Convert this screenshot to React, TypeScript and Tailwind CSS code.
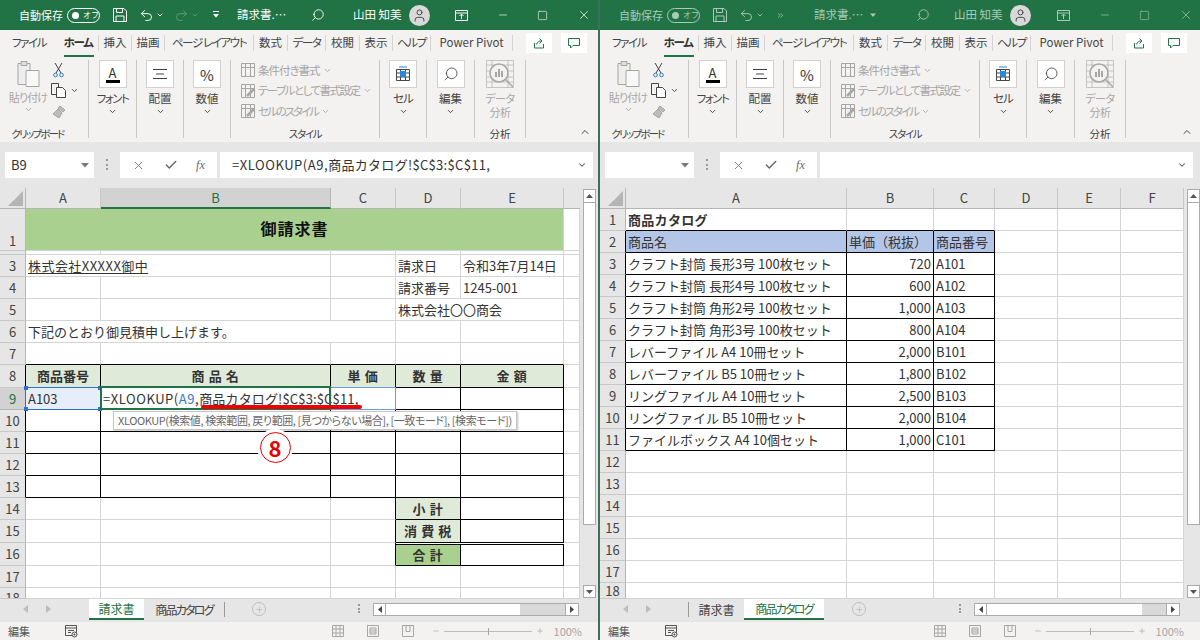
import { ReactNode } from "react";
import { Undo2, Redo2, Search, User, X, Minus, Square, ChevronDown, ChevronUp, Check, Plus, ChevronsRight } from "lucide-react";

const TABS: [string, number, string][] = [
  ["ファイル", 58, "tracking-[-1.4px]"],
  ["ホーム", 41, "tracking-[-1.3px]"],
  ["挿入", 33, ""],
  ["描画", 33, ""],
  ["ページ レイアウト", 89, "tracking-[-1.4px]"],
  ["数式", 34, ""],
  ["データ", 38, "tracking-[-1.4px]"],
  ["校閲", 34, ""],
  ["表示", 33, ""],
  ["ヘルプ", 38, "tracking-[-1.3px]"],
  ["Power Pivot", 82, ""],
];

function Caret({ className = "text-[#666]" }: { className?: string }) {
  return <ChevronDown className={`h-[9px] w-[9px] ${className}`} strokeWidth={2.5} />;
}

function SaveIcon() {
  return (
    <svg width="14" height="14" viewBox="0 0 14 14" fill="none" stroke="currentColor" strokeWidth="1">
      <path d="M.5.5h10.5l2.5 2.5v10.5H.5z" />
      <path d="M3.5.5v4h6v-4M3 13.5V8h8v5.5" />
    </svg>
  );
}

function TitleBar({ active }: { active: boolean }) {
  const fg = active ? "text-white" : "text-[#a9cbb7]";
  return (
    <div className={`flex h-[30px] items-center bg-[#217346] pl-[19px] text-[12px] ${fg}`}>
      <span className="w-[42px] whitespace-nowrap text-[11px]">自動保存</span>
      <div className="ml-[6px] flex h-[15px] w-[33px] items-center rounded-full border border-current pl-[4px]">
        <div className="h-[7px] w-[7px] rounded-full bg-current" />
        <span className="ml-[4px] text-[8px] leading-none">オフ</span>
      </div>
      <div className="ml-[13px]"><SaveIcon /></div>
      <Undo2 className="ml-[12px] h-[15px] w-[15px]" strokeWidth={1.5} />
      <ChevronDown className="ml-[2px] h-[8px] w-[8px]" strokeWidth={2.5} />
      {active ? (
        <>
          <Redo2 className="ml-[10px] h-[15px] w-[15px] text-[#5f9c7c]" strokeWidth={1.5} />
          <ChevronDown className="ml-[2px] h-[8px] w-[8px] text-[#5f9c7c]" strokeWidth={2.5} />
          <svg className="ml-[13px]" width="8" height="8" viewBox="0 0 8 8" fill="currentColor">
            <rect x="1" y="0" width="6" height="1" />
            <path d="M1 3h6L4 6.5z" />
          </svg>
          <span className="ml-[17px] w-[46px] whitespace-nowrap text-[11.5px]">請求書.…</span>
          <Search className="ml-[28px] h-[14px] w-[14px] -scale-x-100" strokeWidth={1.5} />
          <span className="ml-[28px] w-[45px] whitespace-nowrap text-[11.5px]">山田 知美</span>
        </>
      ) : (
        <>
          <ChevronsRight className="ml-[12px] h-[9px] w-[9px]" strokeWidth={2} />
          <span className="ml-[29px] w-[43px] whitespace-nowrap text-[11.5px]">請求書.…</span>
          <svg className="ml-[12px]" width="8" height="8" viewBox="0 0 8 8" fill="currentColor">
            <path d="M1 2.5h6L4 6z" />
          </svg>
          <Search className="ml-[39px] h-[14px] w-[14px] -scale-x-100" strokeWidth={1.5} />
          <span className="ml-[24px] w-[45px] whitespace-nowrap text-[11.5px]">山田 知美</span>
        </>
      )}
      <div className="ml-[11px] flex h-[21px] w-[21px] items-center justify-center rounded-full bg-[#d9d9d9]">
        <User className="h-[15px] w-[15px] text-[#444]" strokeWidth={1.5} />
      </div>
      <svg className={active ? "ml-[25px]" : "ml-[26px]"} width="13" height="11" viewBox="0 0 13 11" fill="none" stroke="currentColor">
        <path d="M.5.5h12v10H.5zM.5 3h12M6.5 9V4.5M4.5 6l2-2 2 2" />
      </svg>
      <Minus className="ml-[29px] h-[12px] w-[12px]" strokeWidth={1.3} />
      <Square className="ml-[28px] h-[11px] w-[11px]" strokeWidth={1.3} />
      <X className="ml-[29px] h-[14px] w-[14px]" strokeWidth={1.2} />
    </div>
  );
}

function TabRow() {
  return (
    <div className="flex h-[26px] items-center bg-[#f3f2f1] text-[11.5px] text-[#444] [font-feature-settings:'palt']">
      {TABS.map(([label, w, track], i) => (
        <div
          key={label}
          className={`relative flex h-[16px] items-center justify-center whitespace-nowrap ${track} ${i === 0 ? "" : "border-r border-[#d6d4d2]"} ${i === 1 ? "font-bold text-[#333]" : ""}`}
          style={{ width: w }}
        >
          {label}
          {i === 1 && <div className="absolute bottom-[-6px] left-[6px] h-[2px] w-[30px] bg-[#217346]" />}
        </div>
      ))}
      <div className="ml-[13px] flex h-[20px] w-[26px] items-center justify-center bg-white">
        <svg width="12" height="12" viewBox="0 0 12 12" fill="none" stroke="#217346">
          <path d="M1.5 6v5h9V7M3.5 7.5C4 5 6 4 8 4M6.5 1.5L9 4 6.5 6.5" />
        </svg>
      </div>
      <div className="ml-[9px] flex h-[20px] w-[26px] items-center justify-center bg-white">
        <svg width="12" height="11" viewBox="0 0 12 11" fill="none" stroke="#217346">
          <path d="M.5.5h11v7H5L2.5 10V7.500H.5z" />
        </svg>
      </div>
    </div>
  );
}

function Group({ width, label, track = "", children }: { width: number; label?: string; track?: string; children: ReactNode }) {
  return (
    <div className="flex h-[78px] flex-col border-r border-[#c8c6c4]" style={{ width }}>
      <div className="min-h-0 flex-1">{children}</div>
      {label && <div className={`-mb-[3px] h-[14px] whitespace-nowrap text-center text-[10.5px] leading-[14px] text-[#444] ${track}`}>{label}</div>}
    </div>
  );
}

function BigButton({ label, track = "", children }: { label: string; track?: string; children: ReactNode }) {
  return (
    <div className="flex flex-col items-center">
      <div className="flex h-[28px] w-[28px] items-center justify-center border border-[#d2d0ce] bg-white">{children}</div>
      <span className={`mt-[2px] whitespace-nowrap text-[11.5px] leading-[17px] text-[#444] ${track}`}>{label}</span>
      <Caret className="text-[#444]" />
    </div>
  );
}

function StyleRow({ label, kind, track }: { label: string; kind: number; track: string }) {
  return (
    <div className="flex h-[20.500px] items-center text-[11.5px] text-[#a6a6a6]">
      <svg className="ml-[10px] mr-[3px] shrink-0" width="14" height="14" viewBox="0 0 14 14" fill="none" stroke="#a6a6a6">
        <path d="M.5.5h13v13H.5zM.5 4.500h13M4.500.5v13M9.500.5v13" />
        {kind > 0 && <path d="M6 12L13 5" strokeWidth="2.500" />}
      </svg>
      <span className={`whitespace-nowrap ${track}`}>{label}</span>
      <Caret className="ml-[3px] text-[#a6a6a6]" />
    </div>
  );
}

function Ribbon() {
  return (
    <div className="flex h-[86px] items-start bg-[#f3f2f1] pt-[4px] [font-feature-settings:'palt']">
      <Group width={89} label="クリップボード" track="pr-[13px] tracking-[-1.800px]">
        <div className="flex">
          <div className="ml-[10px] flex w-[36px] flex-col items-center">
            <svg width="26" height="27" viewBox="0 0 26 27" fill="none" stroke="#a6a6a6">
              <path d="M3 3.500h12v21H3z" fill="#eee" />
              <path d="M6 1.500h6v4H6z" fill="#ddd" />
              <path d="M11 10.500h13v16H11z" fill="#f8f8f8" />
            </svg>
            <span className="mt-[3px] whitespace-nowrap text-[11px] leading-[15px] tracking-[-0.9px] text-[#a6a6a6]">貼り付け</span>
            <Caret className="text-[#a6a6a6]" />
          </div>
          <div className="ml-[5px] flex flex-col items-start">
            <svg className="ml-[2px] mt-[3px]" width="11" height="15" viewBox="0 0 11 15" fill="none" stroke="#444">
              <path d="M2 0l6 10M9 0L3 10" />
              <circle cx="2.500" cy="12" r="1.800" stroke="#2b7cd3" />
              <circle cx="8.500" cy="12" r="1.800" stroke="#2b7cd3" />
            </svg>
            <div className="mt-[5px] flex items-center">
              <svg width="15" height="15" viewBox="0 0 15 15" fill="none" stroke="#444">
                <path d="M.5.5h7v11H.5z" />
                <path d="M5.500 4.500h6l3 3v7h-9z" fill="#fff" />
              </svg>
              <Caret className="ml-[4px] text-[#444]" />
            </div>
            <svg className="ml-[1px] mt-[7px]" width="14" height="14" viewBox="0 0 14 14" fill="#bdbdbd" stroke="#a6a6a6">
              <path d="M8 1l5 4-2 2-5-4zM6 4l4 4-3 5-6-4z" />
            </svg>
          </div>
        </div>
      </Group>
      <Group width={48}>
        <BigButton label="フォント" track="tracking-[-1.500px]">
          <div className="flex flex-col items-center">
            <span className="text-[13px] leading-[13px] text-[#333]">A</span>
            <div className="mt-[1px] h-[3px] w-[14px] bg-black" />
          </div>
        </BigButton>
      </Group>
      <Group width={47}>
        <BigButton label="配置">
          <svg width="14" height="12" viewBox="0 0 14 12" stroke="#444" fill="none">
            <path d="M0 1.500h14M3 6h8M0 10.500h14" />
          </svg>
        </BigButton>
      </Group>
      <Group width={47}>
        <BigButton label="数値">
          <span className="text-[15px] leading-none text-[#333]">%</span>
        </BigButton>
      </Group>
      <Group width={149} label="スタイル" track="tracking-[-1.300px]">
        <StyleRow label="条件付き書式" kind={0} track="tracking-[-1px]" />
        <StyleRow label="テーブルとして書式設定" kind={1} track="tracking-[-1.500px]" />
        <StyleRow label="セルのスタイル" kind={1} track="tracking-[-2px]" />
      </Group>
      <Group width={47}>
        <BigButton label="セル" track="tracking-[-1px]">
          <svg width="16" height="16" viewBox="0 0 16 16" fill="none" stroke="#444">
            <path d="M1.500 3.500h13v11h-13zM1.500 7h13M1.500 11h13M5.500 3.500v11M10.500 3.500v11" />
            <rect x="5" y="5" width="6" height="6" fill="#2b88d8" stroke="none" />
            <path d="M4 1h8" stroke="#2b88d8" />
          </svg>
        </BigButton>
      </Group>
      <Group width={48}>
        <BigButton label="編集">
          <Search className="h-[16px] w-[16px] -scale-x-100 text-[#444]" strokeWidth={1.3} />
        </BigButton>
      </Group>
      <Group width={51} label="分析">
        <div className="flex flex-col items-center">
          <svg width="28" height="28" viewBox="0 0 28 28" fill="none" stroke="#a6a6a6">
            <path d="M.5.5h27v27H.5zM.5 5h27M.5 11h27M.5 17h27M.5 22h27M6 .5v27M22 .5v27" strokeOpacity=".6" />
            <circle cx="13" cy="13" r="9" fill="#f3f2f1" strokeWidth="1.500" />
            <path d="M10 17v-5M13 17V9M16 17v-6" strokeWidth="2" />
            <path d="M19 19l8 8" strokeWidth="1.500" />
          </svg>
          <span className="mt-[3px] text-center text-[11px] leading-[14px] tracking-[-0.5px] text-[#a6a6a6]">データ<br />分析</span>
        </div>
      </Group>
      <div className="flex h-[78px] flex-1 items-end justify-end pr-[7px]">
        <ChevronUp className="h-[12px] w-[12px] text-[#444]" strokeWidth={2} />
      </div>
    </div>
  );
}

function FormulaBar({ name, children }: { name: string; children?: ReactNode }) {
  return (
    <div className="flex h-[46px] items-start bg-[#e6e6e6] pl-[5px] pt-[10px]">
      <div className="flex h-[26px] w-[89px] items-center justify-between bg-white pl-[6px] pr-[5px] text-[13px] text-[#333]">
        <span>{name}</span>
        <svg width="8" height="5" viewBox="0 0 8 5" fill="#777"><path d="M0 0h8L4 4.500z" /></svg>
      </div>
      <div className="ml-[12px] mt-[7px] flex h-[11px] w-[2px] flex-col justify-between">
        <div className="h-[2px] w-[2px] bg-[#999]" />
        <div className="h-[2px] w-[2px] bg-[#999]" />
        <div className="h-[2px] w-[2px] bg-[#999]" />
      </div>
      <div className="ml-[12px] flex h-[26px] w-[97px] items-center justify-around bg-white px-[3px] text-[#666]">
        <X className="h-[13px] w-[13px]" strokeWidth={1.5} />
        <Check className="h-[14px] w-[14px]" strokeWidth={2.5} />
        <span className="font-['Liberation_Serif',serif] text-[12px] italic">fx</span>
      </div>
      <div className="ml-[3px] flex h-[26px] w-[373px] items-center justify-between bg-white pl-[12px] pr-[6px] text-[13px] text-[#333]">
        <span className="whitespace-nowrap">{children}</span>
        <ChevronDown className="h-[10px] w-[10px] text-[#555]" strokeWidth={2.5} />
      </div>
    </div>
  );
}

function Col({ label, selected }: { label: string; selected?: boolean }) {
  return (
    <div
      className={`flex items-center justify-center border-r border-b text-[13px] ${
        selected
          ? "border-r-[#b5b5b5] border-b-2 border-b-[#217346] bg-[#d2d2d2] text-[#217346]"
          : "border-r-[#c8c8c8] border-b-[#b5b5b5] bg-[#e6e6e6] text-[#444]"
      }`}
    >
      {label}
    </div>
  );
}

function Corner() {
  return (
    <div className="flex items-end justify-end border-r border-b border-[#b5b5b5] bg-[#e6e6e6] pb-[2px] pr-[2px]">
      <svg width="15" height="15" viewBox="0 0 15 15"><path d="M15 0v15H0z" fill="#b4b4b4" /></svg>
    </div>
  );
}

function Row({ n, selected, line, place = "items-center" }: { n?: number; selected?: boolean; line?: boolean; place?: string }) {
  return (
    <div
      className={`flex justify-center overflow-hidden border-b border-r text-[13px] ${place} ${
        line ? "border-r-black" : "border-r-[#b5b5b5]"
      } ${selected ? "border-b-[#b5b5b5] bg-[#d2d2d2] text-[#217346]" : "border-b-[#c8c8c8] bg-[#e6e6e6] text-[#444]"}`}
    >
      {n}
    </div>
  );
}

type CellProps = {
  children?: ReactNode;
  r?: boolean;
  b?: boolean;
  fill?: string;
  span?: string;
  align?: string;
  weight?: string;
};

function Cell({ children, r, b, fill = "bg-white", span = "", align = "justify-start", weight = "" }: CellProps) {
  return (
    <div
      className={`flex items-center overflow-visible whitespace-nowrap border-r border-b px-[2px] text-[13px] text-[#333] ${
        r ? "border-r-black" : "border-r-[#d4d4d4]"
      } ${b ? "border-b-black" : "border-b-[#d4d4d4]"} ${fill} ${span} ${align} ${weight}`}
    >
      {children}
    </div>
  );
}

function Head({ children, span = "", fill = "bg-[#e0ead8]" }: { children?: ReactNode; span?: string; fill?: string }) {
  return (
    <Cell r b fill={fill} span={span} align="justify-center" weight="font-bold tracking-[0.6px]">
      {children}
    </Cell>
  );
}

function InvoiceSheet() {
  return (
    <div className="relative grid h-[411px] w-[580px] grid-cols-[26px_75px_230px_65px_65px_103px_16px] grid-rows-[21px_42px_4px_22px_22px_22px_22px_22px_23px_22px_22px_22px_22px_22px_22px_23px_23px_22px_11px] overflow-hidden">
      <Corner />
      <Col label="A" />
      <Col label="B" selected />
      <Col label="C" />
      <Col label="D" />
      <Col label="E" />
      <div className="border-b border-[#b5b5b5] bg-[#e6e6e6]" />

      <Row n={1} place="items-end" />
      <Cell span="col-span-5" fill="bg-[#a9d08e]" align="justify-center" weight="font-bold">
        <span className="mb-[3px] text-[16px] tracking-[1px] text-[#111]">御請求書</span>
      </Cell>
      <Cell />

      <Row />
      <Cell /><Cell /><Cell /><Cell /><Cell /><Cell />

      <Row n={3} />
      <Cell span="col-span-2"><span className="tracking-[0.45px] underline underline-offset-2">株式会社XXXXX御中</span></Cell>
      <Cell /><Cell>請求日</Cell><Cell>令和3年7月14日</Cell><Cell />

      <Row n={4} />
      <Cell /><Cell /><Cell /><Cell>請求番号</Cell><Cell>1245-001</Cell><Cell />

      <Row n={5} />
      <Cell /><Cell /><Cell /><Cell span="col-span-2">株式会社〇〇商会</Cell><Cell />

      <Row n={6} />
      <Cell span="col-span-3">下記のとおり御見積申し上げます。</Cell><Cell /><Cell /><Cell />

      <Row n={7} />
      <Cell b /><Cell b /><Cell b /><Cell b /><Cell b /><Cell />

      <Row n={8} line />
      <Head><span className="tracking-[0px]">商品番号</span></Head>
      <Head>商 品 名</Head>
      <Head>単 価</Head>
      <Head>数 量</Head>
      <Head>金 額</Head>
      <Cell />

      <Row n={9} selected line />
      <Cell r b fill="bg-[#e8eef9]">A103</Cell>
      <Cell span="col-span-2" r b>
        <span className="tracking-[0.55px]">=XLOOKUP(<span className="text-[#3b78c9]">A9</span>,</span>
        <span className="tracking-[0.15px]">商品カタログ!$C$3:$C$11,</span>
      </Cell>
      <Cell r b /><Cell r b /><Cell />

      {[10, 11, 12, 13].map((n) => (
        <div key={n} className="contents">
          <Row n={n} line />
          <Cell r b /><Cell r b /><Cell r b /><Cell r b /><Cell r b /><Cell />
        </div>
      ))}

      <Row n={14} />
      <Cell /><Cell /><Cell r /><Head>小 計</Head><Cell r b /><Cell />
      <Row n={15} />
      <Cell /><Cell /><Cell r /><Head>消 費 税</Head><Cell r b /><Cell />
      <Row n={16} />
      <Cell /><Cell /><Cell r />
      <Head fill="bg-[#a9d08e]" span="mt-[1px] border-t border-t-black">合 計</Head>
      <Cell r b span="mt-[1px] border-t border-t-black" />
      <Cell />
      <Row n={17} />
      <Cell /><Cell /><Cell /><Cell /><Cell /><Cell />
      <Row n={18} place="items-start" />
      <Cell /><Cell /><Cell /><Cell /><Cell /><Cell />

      {/* 編集中の参照セルと注釈 */}
      <div className="absolute left-[25px] top-[199px] h-[23px] w-[76px] border border-[#2f6fd0]">
        <div className="absolute -left-[2px] -top-[2px] h-[4px] w-[4px] bg-[#2f6fd0]" />
        <div className="absolute -right-[2px] -top-[2px] h-[4px] w-[4px] bg-[#2f6fd0]" />
        <div className="absolute -bottom-[2px] -left-[2px] h-[4px] w-[4px] bg-[#2f6fd0]" />
        <div className="absolute -bottom-[2px] -right-[2px] h-[4px] w-[4px] bg-[#2f6fd0]" />
      </div>
      <div className="absolute left-[101px] top-[199px] h-[23px] w-[295px] border border-[#6c9be0]" />
      <div className="absolute left-[100px] top-[198px] h-[24px] w-[231px] border-2 border-[#217346]" />
      <div className="absolute left-[201px] top-[217px] h-[4px] w-[161px] rounded-sm bg-[#ee0000]" />
      <div className="absolute left-[113px] top-[223px] flex h-[19px] w-[404px] items-center whitespace-nowrap border border-[#c6c6c6] bg-white pl-[4px] text-[11px] tracking-[-0.4px] text-[#666] shadow-[1px_1px_2px_rgba(0,0,0,0.25)] [font-feature-settings:'palt']">
        XLOOKUP(検索値, 検索範囲, 戻り範囲, [見つからない場合], [一致モード], [検索モード])
      </div>
      <div className="absolute left-[257px] top-[241px] flex h-[36px] w-[36px] items-center justify-center rounded-full bg-white">
        <div className="flex h-[31px] w-[31px] items-center justify-center rounded-full border-[1.500px] border-[#e60000] text-[22px] font-bold leading-none text-[#e60000]">
          8
        </div>
      </div>
    </div>
  );
}

const PRODUCTS: [string, string, string][] = [
  ["クラフト封筒 長形3号 100枚セット", "720", "A101"],
  ["クラフト封筒 長形4号 100枚セット", "600", "A102"],
  ["クラフト封筒 角形2号 100枚セット", "1,000", "A103"],
  ["クラフト封筒 角形3号 100枚セット", "800", "A104"],
  ["レバーファイル A4 10冊セット", "2,000", "B101"],
  ["レバーファイル B5 10冊セット", "1,800", "B102"],
  ["リングファイル A4 10冊セット", "2,500", "B103"],
  ["リングファイル B5 10冊セット", "2,000", "B104"],
  ["ファイルボックス A4 10個セット", "1,000", "C101"],
];

function CatalogSheet() {
  return (
    <div className="grid h-[411px] w-[584px] grid-cols-[26px_221px_87px_61px_63px_63px_63px] grid-rows-[21px_repeat(17,22px)_16px] overflow-hidden">
      <Corner />
      {["A", "B", "C", "D", "E", "F"].map((c) => (
        <Col key={c} label={c} />
      ))}

      <Row n={1} />
      <Cell b weight="font-bold tracking-[0.3px]">商品カタログ</Cell>
      <Cell b /><Cell b /><Cell /><Cell /><Cell />

      <Row n={2} line />
      <Cell r b fill="bg-[#b4c6e7]">商品名</Cell>
      <Cell r b fill="bg-[#b4c6e7]">単価（税抜）</Cell>
      <Cell r b fill="bg-[#b4c6e7]">商品番号</Cell>
      <Cell /><Cell /><Cell />

      {PRODUCTS.map(([name, price, code], i) => (
        <div key={code} className="contents">
          <Row n={i + 3} line />
          <Cell r b>{name}</Cell>
          <Cell r b align="justify-end">{price}</Cell>
          <Cell r b>{code}</Cell>
          <Cell /><Cell /><Cell />
        </div>
      ))}

      {[12, 13, 14, 15, 16, 17, 18].map((n) => (
        <div key={n} className="contents">
          <Row n={n} />
          <Cell /><Cell /><Cell /><Cell /><Cell /><Cell />
        </div>
      ))}
    </div>
  );
}

function VScroll({ width }: { width: string }) {
  return (
    <div className={`flex h-[411px] flex-col bg-[#e6e6e6] pl-[3px] pt-[1px] ${width}`}>
      <div className="flex h-[14px] w-[13px] items-center justify-center border border-[#ababab] bg-white">
        <svg width="7" height="4" viewBox="0 0 7 4" fill="#555"><path d="M3.500 0L7 4H0z" /></svg>
      </div>
      <div className="h-[322px] w-[13px] border-x border-b border-[#ababab] bg-white" />
      <div className="flex-1" />
      <div className="mb-[1px] flex h-[13px] w-[13px] items-center justify-center border border-[#ababab] bg-white">
        <svg width="7" height="4" viewBox="0 0 7 4" fill="#555"><path d="M0 0h7L3.500 4z" /></svg>
      </div>
    </div>
  );
}

function SheetTabs({ active, thumb, gap, dots }: { active: number; thumb: string; gap: string; dots: string }) {
  return (
    <div className="flex h-[23px] items-start bg-[#e6e6e6] text-[12px] [font-feature-settings:'palt']">
      <div className="ml-[23px] mt-[6px] flex w-[66px] gap-[18px] text-[#bdbdbd]">
        <svg width="5" height="8" viewBox="0 0 5 8" fill="currentColor"><path d="M5 0v8L0 4z" /></svg>
        <svg width="5" height="8" viewBox="0 0 5 8" fill="currentColor"><path d="M0 0v8l5-4z" /></svg>
      </div>
      {active === 1 && <div className="-ml-px mt-[3px] h-[15px] w-px bg-[#999]" />}
      <div
        className={`flex h-[21px] w-[55px] items-center justify-center ${
          active === 0 ? "border-b-2 border-[#217346] bg-white text-[#217346]" : "text-[#444]"
        }`}
      >
        請求書
      </div>
      <div
        className={`flex h-[21px] w-[80px] items-center justify-center tracking-[-1.800px] ${
          active === 1 ? "border-b-2 border-[#217346] bg-white text-[#217346]" : "text-[#444]"
        }`}
      >
        商品カタログ
      </div>
      <div className={`mt-[3px] h-[15px] w-px ${active === 0 ? "bg-[#999]" : "bg-transparent"}`} />
      <div className="ml-[27px] mt-[3px] flex h-[14px] w-[14px] items-center justify-center rounded-full border border-[#bdbdbd] text-[#bdbdbd]">
        <Plus className="h-[9px] w-[9px]" strokeWidth={2} />
      </div>
      <div className={`mt-[5px] flex h-[9px] w-[2px] flex-col justify-between ${dots}`}>
        <div className="h-[2px] w-[2px] bg-[#999]" />
        <div className="h-[2px] w-[2px] bg-[#999]" />
        <div className="h-[2px] w-[2px] bg-[#999]" />
      </div>
      <div className="ml-[13px] mt-[4px] flex h-[13px] items-stretch border border-[#ababab] bg-[#d9d9d9]">
        <div className="flex w-[12px] items-center justify-center border-r border-[#ababab] bg-white">
          <svg width="4" height="7" viewBox="0 0 4 7" fill="#444"><path d="M4 0v7L0 3.500z" /></svg>
        </div>
        <div className={`bg-white ${thumb}`} />
        <div className={gap} />
        <div className="flex w-[13px] items-center justify-center border-l border-[#ababab] bg-white">
          <svg width="4" height="7" viewBox="0 0 4 7" fill="#444"><path d="M0 0v7l4-3.500z" /></svg>
        </div>
      </div>
    </div>
  );
}

function StatusBar() {
  return (
    <div className="flex h-[18px] items-center bg-[#f3f2f1] pl-[8px] text-[11px] text-[#555]">
      <span className="w-[20px] whitespace-nowrap">編集</span>
      <svg className="ml-[37px]" width="13" height="13" viewBox="0 0 13 13" fill="none" stroke="#555">
        <path d="M.5.5h11v10H.5zM.5 3h11M3 5.500h6M3 7.500h3" />
        <circle cx="9.500" cy="9.500" r="2.500" fill="#f3f2f1" />
        <circle cx="9.500" cy="9.500" r="1" fill="#555" stroke="none" />
      </svg>
      <div className="ml-auto flex items-center pr-[16px] text-[#a6a6a6]">
        <svg width="12" height="12" viewBox="0 0 12 12" fill="none" stroke="#a6a6a6">
          <path d="M.5.5h11v11H.5zM.5 4h11M.5 8h11M4 .5v11M8 .5v11" />
        </svg>
        <svg className="ml-[23px]" width="12" height="12" viewBox="0 0 12 12" fill="none" stroke="#a6a6a6">
          <path d="M.5.5h11v11H.5zM3 3h6v6H3zM3 5h6M3 7h6" />
        </svg>
        <svg className="ml-[23px]" width="12" height="12" viewBox="0 0 12 12" fill="none" stroke="#a6a6a6">
          <path d="M.5.5h11v11H.5zM4 .5v6h4v-6" />
        </svg>
        <Minus className="ml-[18px] h-[8px] w-[8px]" strokeWidth={2} />
        <div className="relative ml-[4px] h-px w-[88px] bg-[#bdbdbd]">
          <div className="absolute left-[44px] top-[-3px] h-[7px] w-px bg-[#a6a6a6]" />
        </div>
        <Plus className="ml-[4px] h-[8px] w-[8px]" strokeWidth={2} />
        <span className="ml-[10px] whitespace-nowrap text-[11px]">100%</span>
      </div>
    </div>
  );
}

function Window({ active, children, className }: { active: boolean; children: ReactNode; className: string }) {
  return (
    <div className={`flex h-[640px] shrink-0 flex-col overflow-hidden ${className}`}>
      <TitleBar active={active} />
      <TabRow />
      <Ribbon />
      {children}
      <StatusBar />
    </div>
  );
}

export default function App() {
  return (
    <div className="flex h-[640px] w-[1200px] overflow-hidden bg-white font-['Noto_Sans_CJK_JP',sans-serif]">
      <Window active className="w-[598px]">
        <FormulaBar name="B9">
          <span className="tracking-[0.55px]">=XLOOKUP(A9,</span>
          <span className="tracking-[0.3px]">商品カタログ!$C$3:$C$11,</span>
        </FormulaBar>
        <div className="flex">
          <InvoiceSheet />
          <VScroll width="w-[18px]" />
        </div>
        <SheetTabs active={0} thumb="w-[134px]" gap="w-[45px]" dots="ml-[92px]" />
      </Window>
      <div className="w-[2px] shrink-0 bg-[#3c7058]" />
      <Window active={false} className="w-[600px]">
        <FormulaBar name="" />
        <div className="flex">
          <CatalogSheet />
          <VScroll width="w-[16px]" />
        </div>
        <SheetTabs active={1} thumb="w-[155px]" gap="w-[24px]" dots="ml-[93px]" />
      </Window>
    </div>
  );
}
